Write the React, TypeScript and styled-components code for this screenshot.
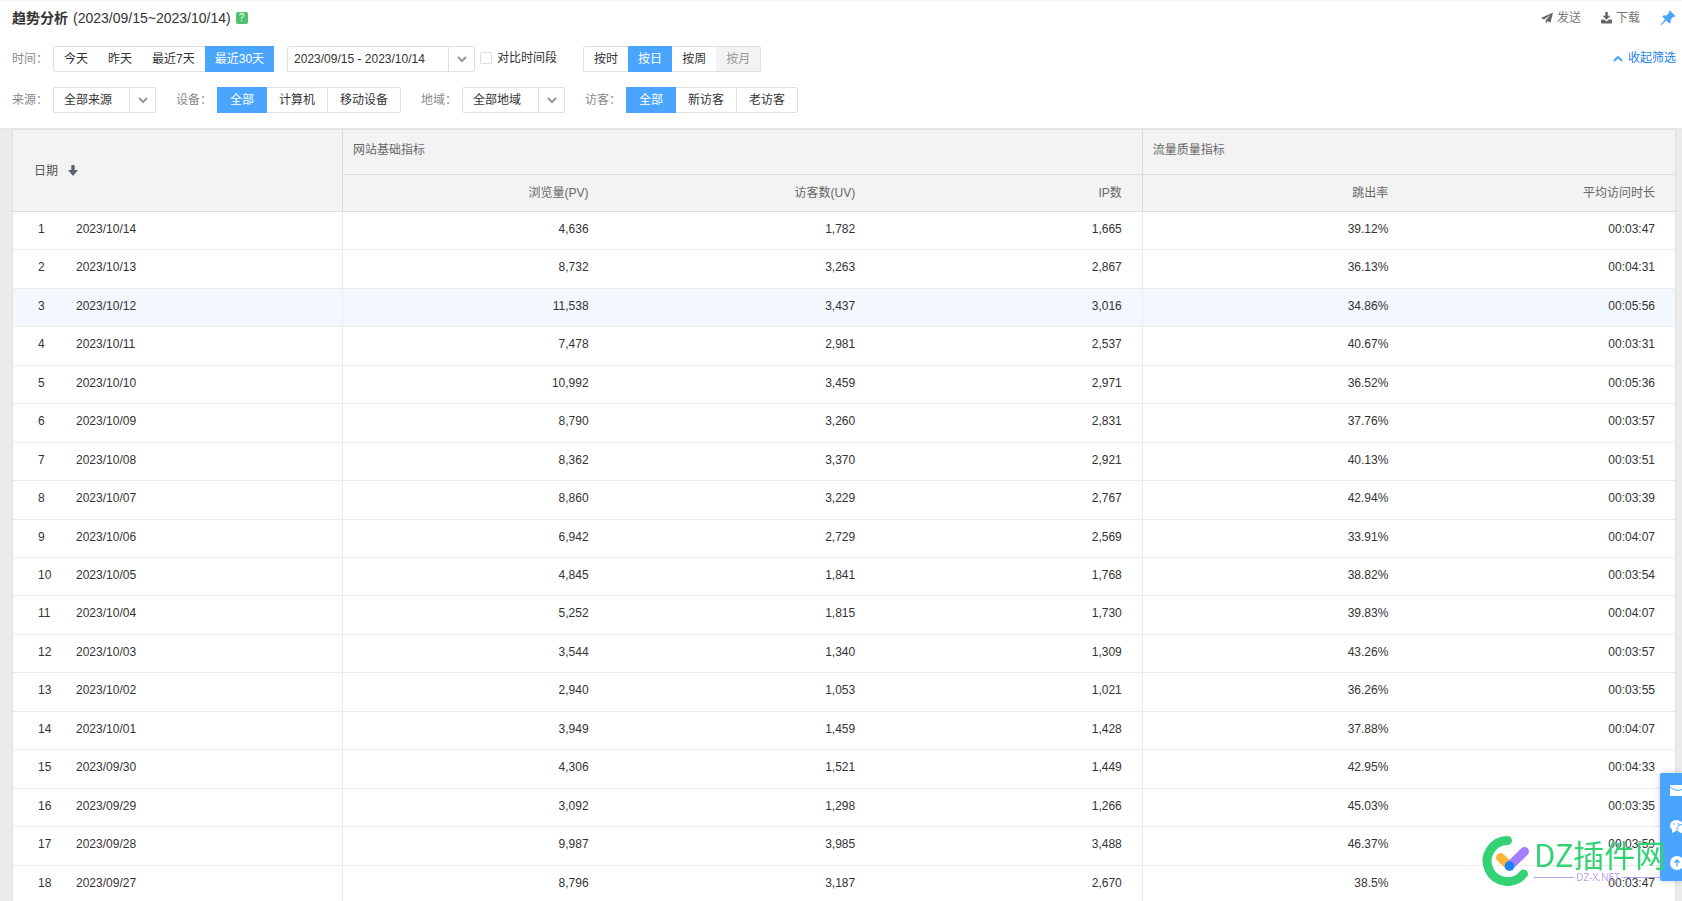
import React from 'react';
import styled, { createGlobalStyle, css } from 'styled-components';

const blue = '#4aa5ff';
const line = '#e0e0e0';

const GlobalStyle = createGlobalStyle`
  *, *::before, *::after { box-sizing: border-box; }
  body { margin: 0; background: #ebebeb; }
  body, button, input, select {
    font-family: "Liberation Sans", "Noto Sans CJK SC", sans-serif;
    font-size: 12px;
    line-height: 18px;
    color: #333;
  }
  button { cursor: pointer; }
`;

const Page = styled.div`
  height: 100vh;
  overflow-y: auto;
  scrollbar-width: none;
`;

const Header = styled.header`
  position: sticky;
  top: 0;
  z-index: 1;
  display: flex;
  flex-direction: column;
  height: 129px;
  padding: 4px 6px 0 12px;
  background: #fff;
  border-top: 1px solid #f5f5f5;
  border-bottom: 1px solid #e6e6e6;
`;

const TitleRow = styled.div`
  display: flex;
  align-items: center;
  height: 26px;
`;

const Title = styled.h1`
  margin: 0;
  font-size: 14px;
  line-height: 20px;
  font-weight: 700;
`;

const Period = styled.span`
  margin-left: 5px;
  font-size: 14px;
  line-height: 20px;
`;

const Help = styled.button`
  width: 12px;
  height: 12px;
  margin-left: 5px;
  padding: 0;
  border: 0;
  border-radius: 2px;
  background: #4fc26e;
  color: #fff;
  font-size: 10px;
  line-height: 12px;
`;

const Actions = styled.div`
  display: flex;
  align-items: center;
  gap: 20px;
  margin-left: auto;
`;

const Action = styled.button`
  display: flex;
  align-items: center;
  gap: 4px;
  padding: 0;
  border: 0;
  background: none;
  color: #777;
`;

const FilterRow = styled.div`
  display: flex;
  align-items: center;
  height: 26px;
  margin-top: 15px;
`;

const Field = styled.div`
  display: flex;
  align-items: center;
  margin-right: 20px;
`;

const Label = styled.label`
  width: 36px;
  margin-right: 5px;
  color: #888;
  white-space: nowrap;
`;

const Group = styled.div`
  display: flex;
  height: 26px;
  border: 1px solid ${line};
  border-radius: 2px;
  background: #fff;
`;

const Option = styled.button<{ $on?: boolean; $wide?: boolean }>`
  height: 26px;
  margin: -1px 0;
  padding: 0 ${(p) => (p.$wide ? 12 : 10)}px;
  border: 0 solid ${line};
  border-width: 1px 0;
  background: transparent;
  line-height: 24px;
  white-space: nowrap;
  ${(p) => p.$wide && css`
    &:nth-child(n + 3) { border-left-width: 1px; }
    &:first-child { margin-left: -1px; padding: 0 13px; }
  `}
  ${(p) => p.$on && css`
    background: ${blue};
    border-color: ${blue};
    color: #fff;
  `}
  ${(p) => p.$on && !p.$wide && css`
    &:last-child { margin-right: -1px; }
  `}
  &:disabled { background: #f3f3f3; color: #999; cursor: default; }
`;

const DateBox = styled.div`
  display: flex;
  width: 188px;
  height: 26px;
  margin-left: 13px;
  border: 1px solid ${line};
  border-radius: 2px;
`;

const DateInput = styled.input`
  flex: 1;
  min-width: 0;
  padding: 0 6px;
  border: 0;
  background: none;
  outline: 0;
`;

const DateToggle = styled.button`
  display: flex;
  align-items: center;
  justify-content: center;
  width: 26px;
  padding: 0;
  border: 0;
  border-left: 1px solid ${line};
  background: none;
`;

const Compare = styled.label`
  display: flex;
  align-items: center;
  gap: 5px;
  margin: 0 26px 2px 5px;
  white-space: nowrap;
`;

const Check = styled.input`
  appearance: none;
  width: 12px;
  height: 12px;
  margin: 0;
  border: 1px solid ${line};
  border-radius: 1px;
  background: #fff;
  &:checked { background: ${blue}; }
`;

const SelectBox = styled.div`
  display: grid;
  grid-template-columns: 1fr 26px;
  width: 103px;
  height: 26px;
  border: 1px solid ${line};
  border-radius: 2px;
`;

const Select = styled.select`
  grid-area: 1 / 1 / 2 / 3;
  appearance: none;
  padding: 0 30px 0 10px;
  border: 0;
  background: none;
  outline: 0;
`;

const SelectArrow = styled.span`
  grid-area: 1 / 2;
  display: flex;
  align-items: center;
  justify-content: center;
  border-left: 1px solid ${line};
  pointer-events: none;
`;

const Collapse = styled.a`
  display: flex;
  align-items: center;
  gap: 5px;
  margin: 0 0 2px auto;
  color: #1a7fec;
  text-decoration: none;
`;

const Sheet = styled.main`
  margin: 0 6px 0 12px;
  border: solid ${line};
  border-width: 1px 1px 0;
  background: #fff;
`;

const Table = styled.table`
  width: 100%;
  table-layout: fixed;
  border-collapse: separate;
  border-spacing: 0;
`;

const FirstCol = styled.col`
  width: 329px;
`;

const Th = styled.th<{ $left?: boolean; $edge?: boolean; $tall?: boolean }>`
  height: ${(p) => (p.$tall ? 45 : 37)}px;
  padding: ${(p) => (p.$left ? (p.$edge ? '0 10px 4px' : '0 10px') : '0 20px 0 0')};
  border: 0 solid #dcdcdc;
  border-width: 0 0 1px ${(p) => (p.$edge ? 1 : 0)}px;
  background: #f3f3f3;
  color: #666;
  font-weight: 400;
  text-align: ${(p) => (p.$left ? 'left' : 'right')};
`;

const SortButton = styled.button`
  display: flex;
  align-items: center;
  gap: 10px;
  margin-left: 11px;
  padding: 0;
  border: 0;
  background: none;
  color: #555;
`;

const Row = styled.tr<{ $hover?: boolean }>`
  height: 38px;
  background: ${(p) => (p.$hover ? '#f3f7fe' : '#fff')};
  &:nth-child(9n + 2), &:nth-child(9n + 4), &:nth-child(9n + 6), &:nth-child(9n + 8) { height: 39px; }
`;

const Td = styled.td<{ $edge?: boolean; $left?: boolean }>`
  padding: 0 20px 4px 0;
  border: 0 solid #ececec;
  border-width: 0 0 1px ${(p) => (p.$edge ? 1 : 0)}px;
  text-align: ${(p) => (p.$left ? 'left' : 'right')};
`;

const Index = styled.span`
  display: inline-block;
  width: 63px;
  padding-left: 25px;
`;

const SideBar = styled.nav`
  position: fixed;
  right: 0;
  bottom: 20px;
  display: flex;
  flex-direction: column;
  width: 22px;
  height: 108px;
  border-radius: 2px 0 0 2px;
  background: ${blue};
  box-shadow: 0 0 6px rgba(0, 0, 0, 0.2);
  overflow: hidden;
`;

const SideButton = styled.button`
  flex: 1;
  width: 36px;
  padding: 0 0 0 10px;
  border: 0;
  background: none;
  line-height: 0;
  text-align: left;
`;

const Watermark = styled.div`
  position: fixed;
  right: 20px;
  bottom: 15px;
  display: flex;
  align-items: center;
  gap: 4px;
  pointer-events: none;
`;

const Brand = styled.div`
  display: flex;
  flex-direction: column;
  width: 128px;
  padding-bottom: 4px;
`;

const BrandName = styled.span`
  color: #33d375;
  font-size: 31px;
  line-height: 36px;
  font-family: "Noto Sans CJK SC", sans-serif;
  font-weight: 400;
  white-space: nowrap;
`;

const BrandUrl = styled.span`
  display: flex;
  align-items: center;
  gap: 2px;
  color: #b9a3f7;
  font-family: "Noto Sans", sans-serif;
  font-size: 10px;
  line-height: 10px;
  white-space: nowrap;
  &::before, &::after { content: ''; flex: 1; height: 1px; background: #b9a3f7; }
`;

const Chevron = ({ up }: { up?: boolean }) => (
  <svg width="10" height="7" viewBox="0 0 10 7" fill="none" stroke={up ? blue : '#999'} strokeWidth="2" aria-hidden="true">
    <path d={up ? 'M1 6l4-4 4 4' : 'M1 1l4 4 4-4'} />
  </svg>
);

const SendIcon = () => (
  <svg width="12" height="12" viewBox="0 0 12 12" fill="#666" aria-hidden="true">
    <path d="M12 0.500L0 6l3 1.600L9.500 3 4.800 8.200V11.500l1.900-2.300L9.600 10.500z" />
  </svg>
);

const DownloadIcon = () => (
  <svg width="11" height="12" viewBox="0 0 11 12" fill="#666" aria-hidden="true">
    <path d="M4.200 0h2.600v3.800h2.700L5.500 7.800 1.500 3.800h2.700z" />
    <path d="M0.700 7.500h2.500l2.300 2 2.300-2h2.500q.7 0 .7.700v2.600q0 .7-.7.7H.7q-.7 0-.7-.7V8.200q0-.7.7-.7z" />
  </svg>
);

const PinIcon = () => (
  <svg width="16" height="16" viewBox="0 0 16 16" fill={blue} aria-hidden="true">
    <path d="M10 0.500L15.500 6l-1.200 1-1-.2-2.600 2.700.1 2.600-1.400 1.400-3-3L1 15.500 0.500 15 5 9.200l-2.700-2.700L3.700 5.200l2.700.2L9.200 2.700 9 1.600z" />
  </svg>
);

const SortIcon = () => (
  <svg width="10" height="11" viewBox="0 0 10 11" fill="#5a6570" aria-hidden="true">
    <path d="M3.300 0h3.400v5H10L5 11 0 5h3.300z" />
  </svg>
);

const MailIcon = () => (
  <svg width="16" height="12" viewBox="0 0 16 12" aria-hidden="true">
    <rect width="16" height="11" rx="1" fill="#fff" />
    <path d="M0 2q8 7 16 0" fill="none" stroke={blue} strokeWidth="1" />
  </svg>
);

const ChatIcon = () => (
  <svg width="18" height="14" viewBox="0 0 18 14" fill="#fff" aria-hidden="true">
    <ellipse cx="6.500" cy="5.500" rx="6.500" ry="5.500" />
    <path d="M2 9v4l4-2z" />
    <ellipse cx="12.500" cy="9" rx="5.500" ry="4.500" stroke={blue} />
    <circle cx="4" cy="4" r="0.800" fill={blue} />
    <circle cx="8.500" cy="4" r="0.800" fill={blue} />
  </svg>
);

const TopIcon = () => (
  <svg width="14" height="14" viewBox="0 0 14 14" aria-hidden="true">
    <circle cx="7" cy="7" r="7" fill="#fff" />
    <path d="M7 10.500V4M4.500 6.500L7 4l2.500 2.500" fill="none" stroke={blue} strokeWidth="1.300" />
  </svg>
);

const BrandIcon = () => (
  <svg width="48" height="50" viewBox="0 0 48 50" fill="none" strokeLinecap="round" aria-hidden="true">
    <path d="M25.500 4.500A20.500 20.500 0 1 0 41.500 38" stroke="#33d375" strokeWidth="9" />
    <path d="M18.500 21.500L27.500 30" stroke="#ffb43c" strokeWidth="9" />
    <path d="M27.500 30L42.500 15.500" stroke="#a57eff" strokeWidth="9" />
    <circle cx="27.500" cy="30" r="4.800" fill="#1684fc" />
  </svg>
);

const rows = [
  ['2023/10/14', '4,636', '1,782', '1,665', '39.12%', '00:03:47'],
  ['2023/10/13', '8,732', '3,263', '2,867', '36.13%', '00:04:31'],
  ['2023/10/12', '11,538', '3,437', '3,016', '34.86%', '00:05:56'],
  ['2023/10/11', '7,478', '2,981', '2,537', '40.67%', '00:03:31'],
  ['2023/10/10', '10,992', '3,459', '2,971', '36.52%', '00:05:36'],
  ['2023/10/09', '8,790', '3,260', '2,831', '37.76%', '00:03:57'],
  ['2023/10/08', '8,362', '3,370', '2,921', '40.13%', '00:03:51'],
  ['2023/10/07', '8,860', '3,229', '2,767', '42.94%', '00:03:39'],
  ['2023/10/06', '6,942', '2,729', '2,569', '33.91%', '00:04:07'],
  ['2023/10/05', '4,845', '1,841', '1,768', '38.82%', '00:03:54'],
  ['2023/10/04', '5,252', '1,815', '1,730', '39.83%', '00:04:07'],
  ['2023/10/03', '3,544', '1,340', '1,309', '43.26%', '00:03:57'],
  ['2023/10/02', '2,940', '1,053', '1,021', '36.26%', '00:03:55'],
  ['2023/10/01', '3,949', '1,459', '1,428', '37.88%', '00:04:07'],
  ['2023/09/30', '4,306', '1,521', '1,449', '42.95%', '00:04:33'],
  ['2023/09/29', '3,092', '1,298', '1,266', '45.03%', '00:03:35'],
  ['2023/09/28', '9,987', '3,985', '3,488', '46.37%', '00:03:59'],
  ['2023/09/27', '8,796', '3,187', '2,670', '38.5%', '00:03:47'],
];

const Choices = ({ items, active, wide, disabled, label }: {
  items: string[]; active: string; wide?: boolean; disabled?: string; label: string;
}) => (
  <Group role="group" aria-label={label}>
    {items.map((item) => (
      <Option key={item} type="button" $wide={wide} $on={item === active} aria-pressed={item === active} disabled={item === disabled}>
        {item}
      </Option>
    ))}
  </Group>
);

const Dropdown = ({ id, value }: { id: string; value: string }) => (
  <SelectBox>
    <Select id={id}><option>{value}</option></Select>
    <SelectArrow><Chevron /></SelectArrow>
  </SelectBox>
);

export default function App() {
  return (
    <Page>
      <GlobalStyle />
      <Header>
        <TitleRow>
          <Title>趋势分析</Title>
          <Period>(2023/09/15~2023/10/14)</Period>
          <Help type="button">?</Help>
          <Actions>
            <Action type="button"><SendIcon />发送</Action>
            <Action type="button"><DownloadIcon />下载</Action>
            <Action type="button" aria-label="固定"><PinIcon /></Action>
          </Actions>
        </TitleRow>
        <FilterRow>
          <Label htmlFor="range">时间：</Label>
          <Choices label="时间" items={['今天', '昨天', '最近7天', '最近30天']} active="最近30天" />
          <DateBox>
            <DateInput id="range" type="text" defaultValue="2023/09/15 - 2023/10/14" />
            <DateToggle type="button" aria-label="选择日期"><Chevron /></DateToggle>
          </DateBox>
          <Compare><Check type="checkbox" />对比时间段</Compare>
          <Choices label="粒度" items={['按时', '按日', '按周', '按月']} active="按日" disabled="按月" />
          <Collapse href="#filters"><Chevron up />收起筛选</Collapse>
        </FilterRow>
        <FilterRow id="filters">
          <Field><Label htmlFor="source">来源：</Label><Dropdown id="source" value="全部来源" /></Field>
          <Field><Label as="span">设备：</Label><Choices wide label="设备" items={['全部', '计算机', '移动设备']} active="全部" /></Field>
          <Field><Label htmlFor="region">地域：</Label><Dropdown id="region" value="全部地域" /></Field>
          <Field><Label as="span">访客：</Label><Choices wide label="访客" items={['全部', '新访客', '老访客']} active="全部" /></Field>
        </FilterRow>
      </Header>
      <Sheet>
        <Table>
          <colgroup><FirstCol /><col /><col /><col /><col /><col /></colgroup>
          <thead>
            <tr>
              <Th $left rowSpan={2}><SortButton type="button">日期<SortIcon /></SortButton></Th>
              <Th $left $edge $tall colSpan={3}>网站基础指标</Th>
              <Th $left $edge $tall colSpan={2}>流量质量指标</Th>
            </tr>
            <tr>
              <Th $edge>浏览量(PV)</Th>
              <Th>访客数(UV)</Th>
              <Th>IP数</Th>
              <Th $edge>跳出率</Th>
              <Th>平均访问时长</Th>
            </tr>
          </thead>
          <tbody>
            {rows.map(([date, ...values], i) => (
              <Row key={date} $hover={i === 2}>
                <Td $left><Index>{i + 1}</Index>{date}</Td>
                {values.map((value, c) => <Td key={c} $edge={c === 0 || c === 3}>{value}</Td>)}
              </Row>
            ))}
          </tbody>
        </Table>
      </Sheet>
      <SideBar>
        <SideButton type="button" aria-label="邮件"><MailIcon /></SideButton>
        <SideButton type="button" aria-label="微信"><ChatIcon /></SideButton>
        <SideButton type="button" aria-label="回到顶部"><TopIcon /></SideButton>
      </SideBar>
      <Watermark>
        <BrandIcon />
        <Brand>
          <BrandName>DZ插件网</BrandName>
          <BrandUrl>DZ-X.NET</BrandUrl>
        </Brand>
      </Watermark>
    </Page>
  );
}
